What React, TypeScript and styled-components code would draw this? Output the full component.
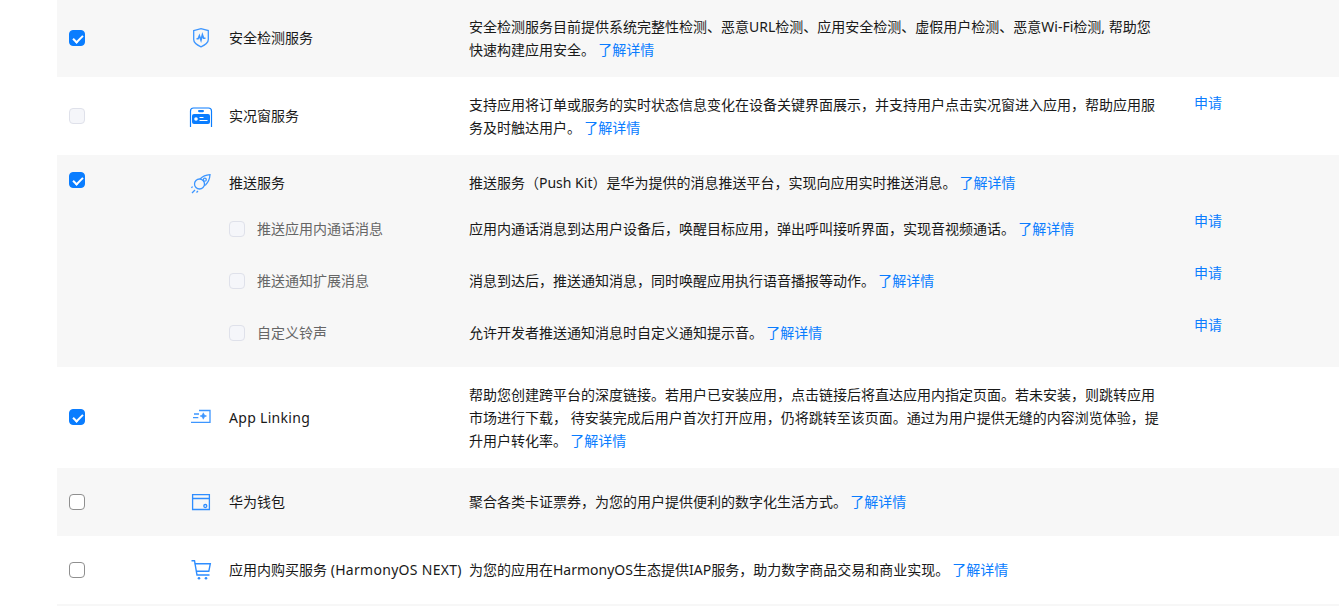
import React from 'react';
import styled, { createGlobalStyle } from 'styled-components';

const GlobalStyle = createGlobalStyle`
  html, body {
    margin: 0;
    padding: 0;
    height: 100%;
    overflow: hidden;
    background: #fff;
  }
  body {
    font-family: "Noto Sans", "Noto Sans CJK SC", sans-serif;
    font-size: 14px;
    line-height: 23px;
    color: #191919;
  }
`;

const Page = styled.div`
  margin-top: -1px;
  padding-left: 57px;
`;

const Row = styled.div<{ $gray?: boolean; $padBottom?: number }>`
  background: ${({ $gray }) => ($gray ? '#f7f7f7' : '#fff')};
  padding-bottom: ${({ $padBottom }) => $padBottom ?? 0}px;
`;

const Line = styled.div<{ $pad?: string }>`
  display: grid;
  grid-template-columns: 120px 52px 240px 725px 1fr;
  grid-auto-rows: minmax(23px, auto);
  align-items: center;
  padding: ${({ $pad }) => $pad ?? '16px 0'};
`;

const CheckCell = styled.div`
  display: flex;
  align-items: center;
  height: 23px;
  padding-left: 12px;
`;

const Check = styled.input.attrs({ type: 'checkbox', readOnly: true })<{ $top?: number }>`
  appearance: none;
  position: relative;
  box-sizing: border-box;
  flex: none;
  width: 16px;
  height: 16px;
  margin: ${({ $top }) => ($top ? `${$top}px 0 0` : '0')};
  border: 1px solid #8f8f8f;
  border-radius: 4px;
  background: #fff;

  &:checked {
    border-color: #0a7dff;
    background: #0a7dff;
  }

  &:checked::after {
    content: '';
    position: absolute;
    left: 4.5px;
    top: 1.5px;
    width: 4px;
    height: 8px;
    border: solid #fff;
    border-width: 0 2px 2px 0;
    transform: rotate(45deg);
  }
`;

const DisabledCheck = styled.span`
  box-sizing: border-box;
  display: block;
  flex: none;
  width: 16px;
  height: 16px;
  border: 1px solid #dfe1ea;
  border-radius: 4px;
  background: #f5f6fa;
`;

const IconCell = styled.div`
  display: flex;
  align-items: center;
  height: 23px;
  padding-left: 12px;
  svg {
    display: block;
    flex: none;
    width: 24px;
    height: 24px;
  }
`;

const Name = styled.div<{ $up?: boolean }>`
  height: 23px;
  margin-top: ${({ $up }) => ($up ? '-1px' : '0')};
  white-space: nowrap;
`;

const Latin = styled.span`
  letter-spacing: 0.3px;
`;

const SubName = styled.div`
  display: flex;
  align-items: center;
  gap: 12px;
  height: 23px;
  color: #666;
  white-space: nowrap;
`;

const Desc = styled.div`
  width: 692px;
`;

const Link = styled.a`
  margin-left: -0.5px;
  color: #0a7dff;
  text-decoration: none;
`;

const Apply = styled.a<{ $up: number }>`
  align-self: start;
  margin-top: ${({ $up }) => -$up}px;
  color: #0a7dff;
  text-decoration: none;
`;

const ShieldIcon = () => (
  <svg viewBox="0 0 24 24" fill="none" stroke="#3d96ff">
    <path d="M4.700 4.600 12 2.700l7.300 1.900v9c0 3-3.400 5.600-7.300 7.200-3.900-1.600-7.300-4.200-7.300-7.200z" strokeWidth="1.300" />
    <path d="M7.500 12.800h1.600l1.300-3 1.600 4.500 1.400-5.500 1.200 3.500h1.900" strokeWidth="1.600" />
  </svg>
);

const LiveIcon = () => (
  <svg viewBox="0 0 24 24" fill="none">
    <path d="M1.500 23V7a3 3 0 0 1 3-3h15a3 3 0 0 1 3 3v16" stroke="#0a7dff" strokeWidth="1.200" />
    <rect x="9" y="6" width="6" height="2.200" rx="1.100" fill="#0a7dff" />
    <rect x="3" y="10" width="18" height="10" rx="2" fill="#0a7dff" />
    <circle cx="7" cy="15" r="1.800" fill="#fff" />
    <path d="M10.500 13.500h4M10.500 16.500h8" stroke="#fff" strokeWidth="1.200" />
  </svg>
);

const RocketIcon = () => (
  <svg viewBox="0 0 24 24" fill="none" stroke="#3d96ff" strokeWidth="1.300">
    <circle cx="10.500" cy="13" r="5" />
    <path d="M11 8c2.500-2.500 6-4 10-4.300-.3 4-1.800 7.500-4.300 10l-1.500 1" />
    <circle cx="15.800" cy="8.700" r="1.500" />
    <path d="M3.500 15.500 2.500 17M6 19l-3 3M9 20l-1.500 1.500" />
  </svg>
);

const LinkingIcon = () => (
  <svg viewBox="0 0 24 24" fill="none" stroke="#3d96ff" strokeWidth="1.300">
    <path d="M10 4.500h11v11.800H2" />
    <path d="M5 8h5M4 11.700h5.300" />
    <path d="M14.300 6.800l1 2.200 2.200 1-2.200 1-1 2.200-1-2.200-2.200-1 2.200-1z" fill="#3d96ff" strokeWidth=".6" />
  </svg>
);

const WalletIcon = () => (
  <svg viewBox="0 0 24 24" fill="none" stroke="#2e8dff" strokeWidth="1.300">
    <path d="M3.600 4.600h16.800v14.900H3.600z" />
    <path d="M3.600 8.500h16.800" strokeWidth="1.500" />
    <circle cx="16.300" cy="16" r="1.500" />
  </svg>
);

const CartIcon = () => (
  <svg viewBox="0 0 24 24" fill="none" stroke="#2e8dff" strokeWidth="1.400">
    <path d="M2.500 2.700h3l2.500 14.300h12.500" />
    <path d="M5.800 5.800h15.500l-1.500 7.500H7.300" />
    <circle cx="10" cy="20.300" r="1.300" fill="#2e8dff" stroke="none" />
    <circle cx="17" cy="20.300" r="1.300" fill="#2e8dff" stroke="none" />
  </svg>
);

const More = () => <Link href="#">了解详情</Link>;

const subItems = [
  { name: '推送应用内通话消息', text: '应用内通话消息到达用户设备后，唤醒目标应用，弹出呼叫接听界面，实现音视频通话。' },
  { name: '推送通知扩展消息', text: '消息到达后，推送通知消息，同时唤醒应用执行语音播报等动作。' },
  { name: '自定义铃声', text: '允许开发者推送通知消息时自定义通知提示音。' },
];

export default function App() {
  return (
    <Page>
      <GlobalStyle />
      <Row $gray>
        <Line>
          <CheckCell><Check defaultChecked /></CheckCell>
          <IconCell><ShieldIcon /></IconCell>
          <Name $up>安全检测服务</Name>
          <Desc>安全检测服务目前提供系统完整性检测、恶意URL检测、应用安全检测、虚假用户检测、恶意Wi-Fi检测, 帮助您快速构建应用安全。 <More /></Desc>
        </Line>
      </Row>
      <Row>
        <Line>
          <CheckCell><DisabledCheck /></CheckCell>
          <IconCell><LiveIcon /></IconCell>
          <Name $up>实况窗服务</Name>
          <Desc>支持应用将订单或服务的实时状态信息变化在设备关键界面展示，并支持用户点击实况窗进入应用，帮助应用服务及时触达用户。 <More /></Desc>
          <Apply href="#" $up={2}>申请</Apply>
        </Line>
      </Row>
      <Row $gray $padBottom={8}>
        <Line $pad="16px 0 9px">
          <CheckCell><Check defaultChecked $top={-5} /></CheckCell>
          <IconCell><RocketIcon /></IconCell>
          <Name>推送服务</Name>
          <Desc>推送服务（Push Kit）是华为提供的消息推送平台，实现向应用实时推送消息。 <More /></Desc>
        </Line>
        {subItems.map((item) => (
          <Line key={item.name} $pad="14px 0 15px">
            <span />
            <span />
            <SubName><DisabledCheck />{item.name}</SubName>
            <Desc>{item.text} <More /></Desc>
            <Apply href="#" $up={8}>申请</Apply>
          </Line>
        ))}
      </Row>
      <Row>
        <Line>
          <CheckCell><Check defaultChecked $top={-1} /></CheckCell>
          <IconCell><LinkingIcon /></IconCell>
          <Name><Latin>App Linking</Latin></Name>
          <Desc>帮助您创建跨平台的深度链接。若用户已安装应用，点击链接后将直达应用内指定页面。若未安装，则跳转应用市场进行下载， 待安装完成后用户首次打开应用，仍将跳转至该页面。通过为用户提供无缝的内容浏览体验，提升用户转化率。 <More /></Desc>
        </Line>
      </Row>
      <Row $gray>
        <Line $pad="22px 0 23px">
          <CheckCell><Check /></CheckCell>
          <IconCell><WalletIcon /></IconCell>
          <Name>华为钱包</Name>
          <Desc>聚合各类卡证票券，为您的用户提供便利的数字化生活方式。 <More /></Desc>
        </Line>
      </Row>
      <Row>
        <Line $pad="22px 0 23px">
          <CheckCell><Check /></CheckCell>
          <IconCell><CartIcon /></IconCell>
          <Name>应用内购买服务 <Latin>(HarmonyOS NEXT)</Latin></Name>
          <Desc>为您的应用在HarmonyOS生态提供IAP服务，助力数字商品交易和商业实现。 <More /></Desc>
        </Line>
      </Row>
      <Row $gray>
        <Line $pad="22px 0 23px" />
      </Row>
    </Page>
  );
}
